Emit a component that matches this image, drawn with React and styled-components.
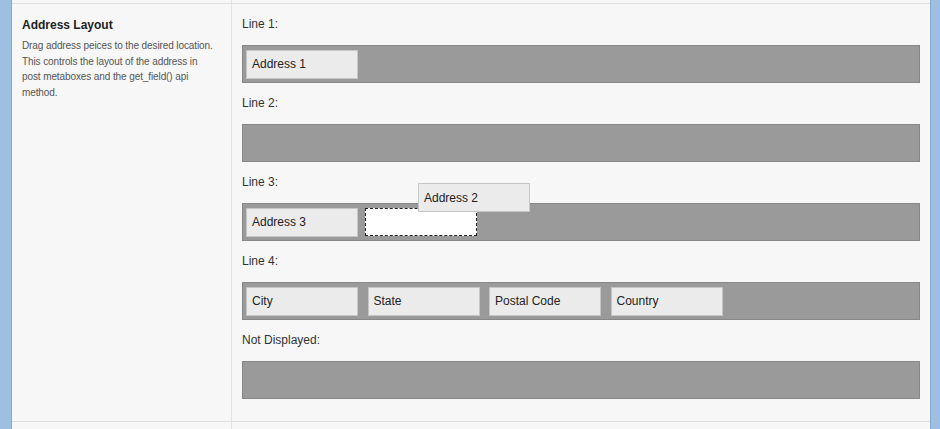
import styled, { createGlobalStyle } from "styled-components";

const GlobalStyle = createGlobalStyle`
  html, body {
    margin: 0;
    padding: 0;
    background: #f7f7f7;
  }
  body {
    font-family: "Liberation Sans", Arial, sans-serif;
  }
`;

const Page = styled.div`
  display: flex;
  height: 429px;
  overflow: hidden;
  background: #f7f7f7;
`;

const Frame = styled.div`
  flex-shrink: 0;
  box-sizing: border-box;
  width: ${(p) => p.$width}px;
  background: #9ec0e0;
  border-${(p) => p.$side}: 1px solid #86aad2;
`;

const Table = styled.div`
  flex: 1;
  display: flex;
  flex-direction: column;
`;

const Row = styled.div`
  box-sizing: border-box;
  display: grid;
  grid-template-columns: 220px 1fr;
  border-bottom: ${(p) => (p.$last ? "none" : "1px solid #dedede")};
  height: ${(p) => (p.$height ? `${p.$height}px` : "auto")};
`;

const Cell = styled.div`
  box-sizing: border-box;
  border-right: ${(p) => (p.$side ? "1px solid #e3e3e3" : "none")};
  padding: ${(p) => p.$pad || "0"};
`;

const Title = styled.div`
  font-size: 12px;
  line-height: 16px;
  font-weight: bold;
  color: #222;
`;

const Description = styled.p`
  margin: 5px 0 0;
  font-size: 10px;
  line-height: 15.5px;
  letter-spacing: -0.1px;
  color: #555;
`;

const Line = styled.div`
  position: relative;
`;

const Label = styled.div`
  font-size: 12px;
  line-height: 15px;
  color: #333;
  margin-bottom: 13px;
`;

const Bar = styled.div`
  box-sizing: border-box;
  display: flex;
  align-items: center;
  gap: 9.5px;
  height: 38px;
  padding: 0 3px;
  margin-bottom: 13px;
  background: #9a9a9a;
  border: 1px solid #878787;
`;

const Piece = styled.div`
  box-sizing: border-box;
  display: flex;
  align-items: center;
  width: 112px;
  height: 29px;
  padding-left: 5px;
  background: #ebebeb;
  border: 1px solid #c6c6c6;
  font-size: 12px;
  color: #222;
`;

const Placeholder = styled.div`
  box-sizing: border-box;
  width: 112px;
  height: 28px;
  margin-left: -3px;
  background: #fff;
  border: 1px dashed #222;
`;

const DraggedPiece = styled(Piece)`
  position: absolute;
  left: 176px;
  top: 8px;
  z-index: 2;
`;

const lines = [
  { label: "Line 1:", pieces: ["Address 1"] },
  { label: "Line 2:", pieces: [] },
  { label: "Line 3:", pieces: ["Address 3"], placeholder: true, dragged: "Address 2" },
  { label: "Line 4:", pieces: ["City", "State", "Postal Code", "Country"] },
  { label: "Not Displayed:", pieces: [] },
];

export default function App() {
  return (
    <>
      <GlobalStyle />
      <Page>
        <Frame $width={12} $side="right" />
        <Table>
          <Row $height={6}>
            <Cell $side />
            <Cell />
          </Row>
          <Row>
            <Cell $side $pad="13px 17px 12px 10px">
              <Title>Address Layout</Title>
              <Description>
                Drag address peices to the desired location. This controls the
                layout of the address in post metaboxes and the get_field() api
                method.
              </Description>
            </Cell>
            <Cell $pad="13px 10px 9px">
              {lines.map((line) => (
                <Line key={line.label}>
                  <Label>{line.label}</Label>
                  <Bar>
                    {line.pieces.map((p) => (
                      <Piece key={p}>{p}</Piece>
                    ))}
                    {line.placeholder && <Placeholder />}
                  </Bar>
                  {line.dragged && <DraggedPiece>{line.dragged}</DraggedPiece>}
                </Line>
              ))}
            </Cell>
          </Row>
          <Row $last $height={10}>
            <Cell $side />
            <Cell />
          </Row>
        </Table>
        <Frame $width={10} $side="left" />
      </Page>
    </>
  );
}
